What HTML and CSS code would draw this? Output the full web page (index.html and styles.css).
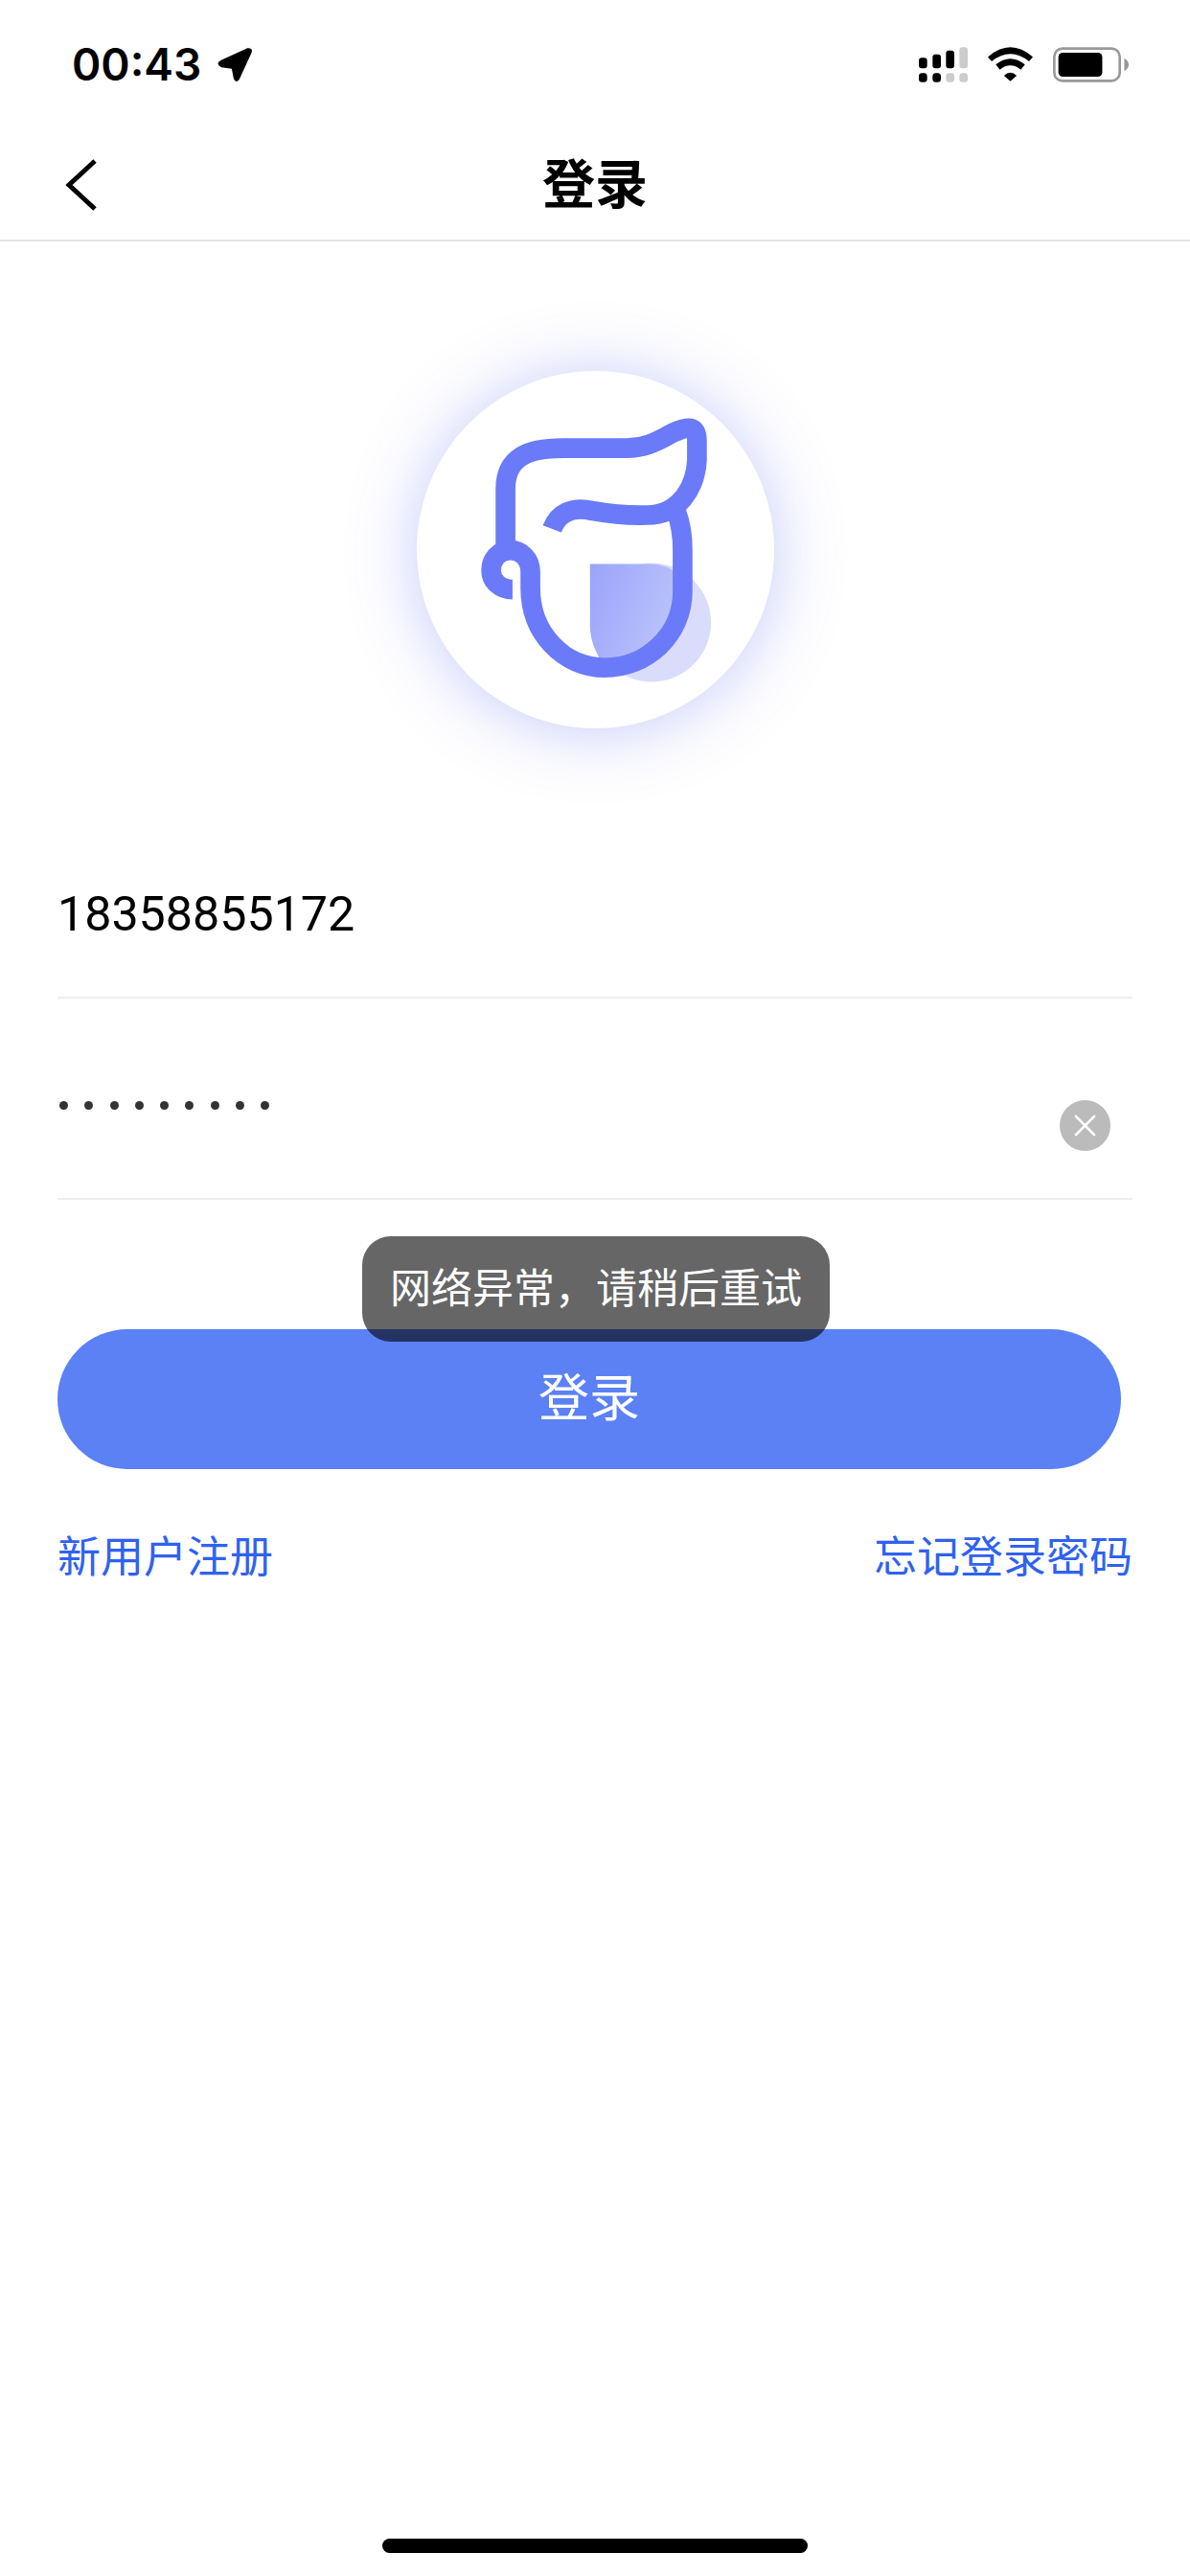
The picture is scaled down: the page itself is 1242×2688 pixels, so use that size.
FILE: index.html
```html
<!DOCTYPE html>
<html lang="zh">
<head>
  <meta charset="UTF-8">
  <meta name="viewport" content="width=device-width, initial-scale=1">
  <title>登录</title>
  <link rel="stylesheet" href="styles.css">
</head>
<body>
  <div class="page">
    <div class="statusbar">
      <div class="status-left">
        <span class="time">00:43</span>
        <svg class="arrow" viewBox="495 58 115 112"><path d="M592 62 Q612 60 605 78 L567 160 Q556 175 549 158 L543 127 L510 122 Q490 111 508 100 Z" fill="#000"/></svg>
      </div>
      <div class="status-right">
        <svg class="signal" viewBox="87 57 153 110">
          <rect x="87" y="90" width="26" height="33" rx="9" fill="#000"/>
          <rect x="130" y="80" width="26" height="43" rx="9" fill="#000"/>
          <rect x="172" y="68" width="26" height="55" rx="9" fill="#000"/>
          <rect x="214" y="57" width="26" height="66" rx="9" fill="#ccc"/>
          <rect x="87" y="138" width="26" height="29" rx="10" fill="#000"/>
          <rect x="130" y="138" width="26" height="29" rx="10" fill="#000"/>
          <rect x="172" y="138" width="26" height="29" rx="10" fill="#ccc"/>
          <rect x="214" y="138" width="26" height="29" rx="10" fill="#ccc"/>
        </svg>
        <svg class="wifi" viewBox="305 57 142 108">
          <path d="M305 88 Q376 27 447 88 L435 102 Q376 55 317 102 Z" fill="#000"/>
          <path d="M330 112 Q376 75 422 112 L409 128 Q376 102 343 128 Z" fill="#000"/>
          <path d="M356 147 Q376 128 396 147 L376 165 Z" fill="#000"/>
        </svg>
        <svg class="battery" viewBox="508 57 238 110">
          <rect x="512" y="61" width="206" height="102" rx="26" fill="none" stroke="#999" stroke-width="8"/>
          <rect x="525" y="74" width="138" height="76" rx="14" fill="#000"/>
          <path d="M732 92 Q746 100 746 112 Q746 124 732 132 Z" fill="#999"/>
        </svg>
      </div>
    </div>

    <div class="navbar">
      <svg class="back" viewBox="0 0 34 54"><path d="M31 2 L4 27 L31 52" fill="none" stroke="#000" stroke-width="5"/></svg>
      <span class="nav-title">登录</span>
    </div>

    <div class="logo-wrap">
      <div class="logo-circle">
        <svg class="logo" viewBox="222 200 1120 1120">
          <defs>
            <linearGradient id="shield" x1="0" y1="0" x2="1" y2="0.4">
              <stop offset="0" stop-color="#9aa3fa"/>
              <stop offset="1" stop-color="#bcc4fb"/>
            </linearGradient>
          </defs>
          <circle cx="958" cy="988" r="186" fill="#d9ddfb"/>
          <path d="M765 805 H950 C1020 805 1055 840 1055 900 C1055 1030 940 1130 812 1130 C780 1080 765 1040 765 1000 Z" fill="url(#shield)"/>
          <g fill="none" stroke="#6a7af8" stroke-width="62">
            <path d="M500 770 V570 C500 470 570 442 680 442 H880 C950 442 990 410 1030 392 C1075 372 1100 372 1100 420 V480 C1095 570 1040 652 945 652 C870 655 810 645 770 638 C710 625 665 645 646 695"/>
            <path d="M1035 640 C1050 680 1055 720 1055 760 V890 C1055 1030 940 1130 812 1130 C680 1130 578 1020 578 880 V830 C578 790 550 762 515 762 C480 762 455 790 455 825 C455 860 485 885 522 885"/>
          </g>
        </svg>
      </div>
    </div>

    <div class="form">
      <div class="field field-phone">18358855172</div>
      <div class="field field-pass">
        <div class="dots">
          <i></i><i></i><i></i><i></i><i></i><i></i><i></i><i></i><i></i>
        </div>
        <span class="clear">
          <svg viewBox="0 0 24 24"><path d="M2 2 L22 22 M22 2 L2 22" stroke="#fff" stroke-width="2.8" stroke-linecap="round" fill="none"/></svg>
        </span>
      </div>
      <div class="btn-login">登录</div>
      <div class="links">
        <a>新用户注册</a>
        <a>忘记登录密码</a>
      </div>
      <div class="toast">网络异常，请稍后重试</div>
    </div>

    <div class="home-bar"></div>
  </div>
</body>
</html>
```

FILE: styles.css
```css
* {
  box-sizing: border-box;
}
html, body {
  margin: 0;
  padding: 0;
  background: #ffffff;
}
body {
  font-family: Roboto, "Noto Sans CJK SC", sans-serif;
  color: #000000;
}
.page {
  width: 1242px;
  height: 2688px;
  display: flex;
  flex-direction: column;
}

/* status bar */
.statusbar {
  height: 132px;
  padding: 49px 64px 0 75px;
  display: flex;
  justify-content: space-between;
  align-items: flex-start;
}
.status-left {
  display: flex;
  align-items: center;
  gap: 16px;
  height: 37px;
}
.time {
  font-family: Inter, sans-serif;
  font-size: 46px;
  font-weight: 600;
  line-height: 37px;
}
.arrow {
  width: 38px;
  height: 37px;
}
.status-right {
  display: flex;
  align-items: flex-start;
  gap: 21px;
  height: 37px;
}
.signal {
  width: 51px;
  height: 37px;
}
.wifi {
  width: 47px;
  height: 36px;
}
.battery {
  width: 79px;
  height: 37px;
}

/* nav */
.navbar {
  height: 120px;
  border-bottom: 2px solid #e4e4e4;
  padding: 0 0 0 68px;
  display: flex;
  align-items: center;
  position: relative;
}
.back {
  width: 34px;
  height: 54px;
  margin-top: 4px;
}
.nav-title {
  position: absolute;
  left: 0;
  right: 0;
  top: 30px;
  text-align: center;
  font-size: 55px;
  line-height: 62px;
  font-weight: 700;
}

/* logo */
.logo-wrap {
  height: 641px;
  padding-top: 135px;
  display: flex;
  justify-content: center;
}
.logo-circle {
  width: 373px;
  height: 373px;
  border-radius: 50%;
  background: #ffffff;
  box-shadow: 0 3px 70px rgba(90, 104, 240, 0.35);
}
.logo {
  display: block;
  width: 373px;
  height: 373px;
}

/* form */
.form {
  padding: 0 60px;
  position: relative;
}
.field {
  border-bottom: 2px solid #eeeeee;
}
.field-phone {
  height: 149px;
  padding-top: 31px;
  font-size: 50.2px;
  line-height: 60px;
}
.field-pass {
  height: 210px;
  padding: 107px 23px 0 2px;
  display: flex;
  justify-content: space-between;
}
.dots {
  display: flex;
  gap: 17.3px;
  height: 9px;
}
.dots i {
  display: block;
  width: 9px;
  height: 9px;
  border-radius: 50%;
  background: #333333;
}
.clear {
  width: 53px;
  height: 53px;
  margin-top: -1px;
  border-radius: 50%;
  background: #bbbbbb;
  display: flex;
  align-items: center;
  justify-content: center;
}
.clear svg {
  width: 23px;
  height: 23px;
}
.btn-login {
  width: 1110px;
  height: 146px;
  margin-top: 135px;
  border-radius: 73px;
  background: #5b81f5;
  color: #ffffff;
  font-size: 53px;
  line-height: 146px;
  text-align: center;
}
.links {
  margin-top: 63px;
  display: flex;
  justify-content: space-between;
  font-size: 45px;
  line-height: 60px;
  color: #2f62f0;
}
.toast {
  position: absolute;
  left: 378px;
  top: 397px;
  width: 488px;
  height: 110px;
  border-radius: 30px;
  background: rgba(0, 0, 0, 0.6);
  color: #ffffff;
  font-size: 43px;
  line-height: 110px;
  text-align: center;
}

/* home indicator */
.home-bar {
  width: 444px;
  height: 15px;
  border-radius: 8px;
  background: #000000;
  margin: auto auto 24px;
}
```
